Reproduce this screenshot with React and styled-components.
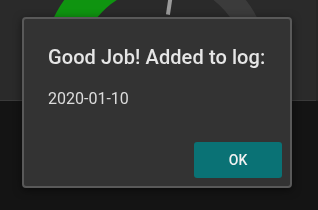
import styled, { createGlobalStyle } from "styled-components";

const GlobalStyle = createGlobalStyle`
  html, body {
    margin: 0;
    padding: 0;
    background: #141414;
    font-family: Roboto, "Noto Sans", sans-serif;
    overflow: hidden;
  }
`;

const Page = styled.div`
  width: 318px;
  height: 210px;
  background: #141414;
`;

const TopBand = styled.div`
  display: flex;
  background: #262626;
`;

const GaugePanel = styled.div`
  width: 316px;
  height: 100px;
  background: #2a2a2a;
  border-bottom: 1px solid #3a3a3a;
  overflow: hidden;
`;

const Backdrop = styled.div`
  position: fixed;
  inset: 0;
`;

const Dialog = styled.div`
  position: absolute;
  left: 22px;
  top: 17px;
  width: 266px;
  height: 167px;
  display: flex;
  flex-direction: column;
  background: #333333;
  border: 2px solid #595959;
  border-radius: 4px;
  box-shadow: 0 2px 8px rgba(0, 0, 0, 0.5);
`;

const Title = styled.h2`
  margin: 0;
  padding: 22px 24px 14px;
  font-size: 20px;
  font-weight: 500;
  line-height: 32px;
  color: #e6e6e6;
  letter-spacing: 0.1px;
`;

const Content = styled.p`
  margin: 0;
  padding: 0 24px;
  font-size: 16px;
  line-height: 24px;
  color: #dcdcdc;
`;

const Actions = styled.div`
  margin-top: auto;
  display: flex;
  justify-content: flex-end;
  padding: 8px;
`;

const OkButton = styled.button`
  width: 88px;
  height: 36px;
  border: none;
  border-radius: 3px;
  background: #0a7275;
  color: #f2f2f2;
  font-family: Roboto, "Noto Sans", sans-serif;
  font-size: 14px;
  font-weight: 500;
  text-transform: uppercase;
  cursor: pointer;
`;

function arcPath(cx, cy, r, a0, a1) {
  const rad = (a) => (a * Math.PI) / 180;
  const x0 = cx + r * Math.cos(rad(a0));
  const y0 = cy - r * Math.sin(rad(a0));
  const x1 = cx + r * Math.cos(rad(a1));
  const y1 = cy - r * Math.sin(rad(a1));
  const large = Math.abs(a0 - a1) > 180 ? 1 : 0;
  return `M ${x0} ${y0} A ${r} ${r} 0 ${large} 1 ${x1} ${y1}`;
}

function Gauge({ value }) {
  const cx = 160;
  const cy = 68;
  const split = 180 - value * 180;
  const rad = (split * Math.PI) / 180;
  return (
    <svg width="316" height="100" viewBox="0 0 316 100">
      <path d={arcPath(cx, cy, 98, split, -20)} stroke="#3b3b3b" strokeWidth="23" fill="none" />
      <path d={arcPath(cx, cy, 99, 200, split)} stroke="#0f9410" strokeWidth="37" fill="none" />
      <line
        x1={cx + 54 * Math.cos(rad)}
        y1={cy - 54 * Math.sin(rad)}
        x2={cx + 84 * Math.cos(rad)}
        y2={cy - 84 * Math.sin(rad)}
        stroke="#9a9a9a"
        strokeWidth="4"
      />
    </svg>
  );
}

export default function App() {
  return (
    <Page>
      <GlobalStyle />
      <TopBand>
        <GaugePanel>
          <Gauge value={0.547} />
        </GaugePanel>
      </TopBand>
      <Backdrop>
        <Dialog>
          <Title>Good Job! Added to log:</Title>
          <Content>2020-01-10</Content>
          <Actions>
            <OkButton>OK</OkButton>
          </Actions>
        </Dialog>
      </Backdrop>
    </Page>
  );
}
